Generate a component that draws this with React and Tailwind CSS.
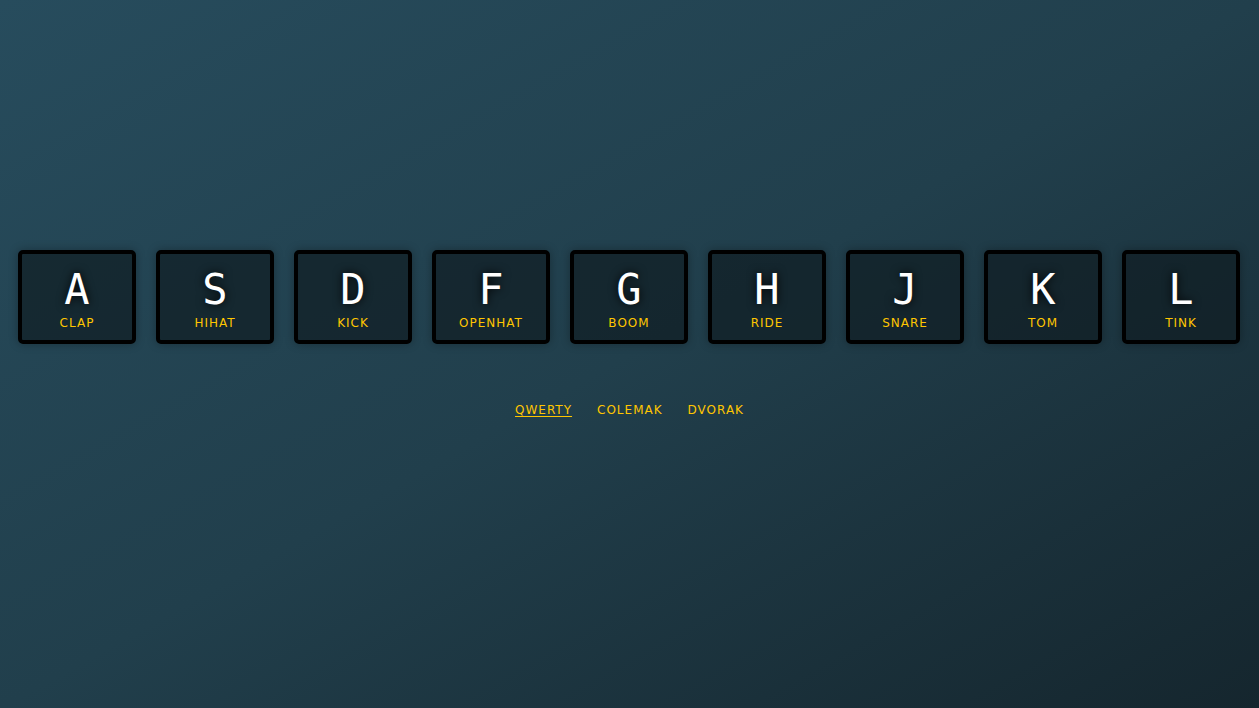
import React, { useState } from "react";

const KEYS = [
  ["A", "clap"],
  ["S", "hihat"],
  ["D", "kick"],
  ["F", "openhat"],
  ["G", "boom"],
  ["H", "ride"],
  ["J", "snare"],
  ["K", "tom"],
  ["L", "tink"],
];

const LAYOUTS = ["qwerty", "colemak", "dvorak"];

export default function App() {
  const [layout, setLayout] = useState("qwerty");

  return (
    <div className="min-h-screen w-full bg-gradient-to-br from-[#274c5d] via-[#213f4c] to-[#15262e] font-['DejaVu_Sans',sans-serif]">
      <div className="flex flex-col items-center pt-[250px]">
        <div className="flex gap-5 pr-px">
          {KEYS.map(([letter, sound]) => (
            <div
              key={letter}
              className="flex h-[94px] w-[118px] flex-col items-center justify-center rounded-[5px] border-4 border-black bg-[#0f1d22]/70 shadow-[0_0_10px_rgba(0,0,0,0.3)]"
            >
              <kbd className="mt-[3px] font-['DejaVu_Sans_Mono',monospace] text-[42px] leading-none text-white [text-shadow:0_0_10px_black]">
                {letter}
              </kbd>
              <span className="mt-[6px] text-[12px] leading-none tracking-[1px] uppercase text-[#ffc600]">
                {sound}
              </span>
            </div>
          ))}
        </div>

        <div className="mt-[60px] flex gap-[25px]">
          {LAYOUTS.map((name) => (
            <button
              key={name}
              onClick={() => setLayout(name)}
              className={
                "text-[12px] leading-none tracking-[1px] uppercase text-[#ffc600] " +
                (layout === name ? "underline underline-offset-2" : "")
              }
            >
              {name}
            </button>
          ))}
        </div>
      </div>
    </div>
  );
}
